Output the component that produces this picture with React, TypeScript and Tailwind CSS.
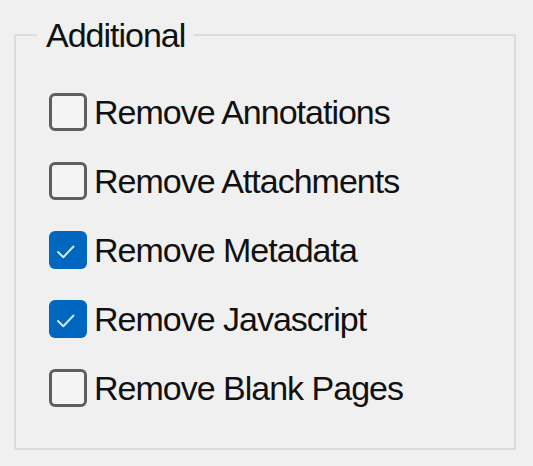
const options = [
  { label: 'Remove Annotations', checked: false },
  { label: 'Remove Attachments', checked: false },
  { label: 'Remove Metadata', checked: true },
  { label: 'Remove Javascript', checked: true },
  { label: 'Remove Blank Pages', checked: false },
]

function CheckBox({ checked }: { checked: boolean }) {
  if (checked) {
    return (
      <span className="flex h-[38px] w-[38px] shrink-0 items-center justify-center rounded-[6px] bg-[#0067c0]">
        <svg width="38" height="38" viewBox="0 0 38 38" fill="none">
          <path
            d="M9 21l5.3 5.2L24.5 15.5"
            stroke="#d6e7f7"
            strokeWidth="2"
            strokeLinecap="round"
            strokeLinejoin="round"
          />
        </svg>
      </span>
    )
  }
  return (
    <span className="block h-[38px] w-[38px] shrink-0 rounded-[6px] border-[3px] border-[#5f5f5f] bg-[#f4f4f4]" />
  )
}

export default function App() {
  return (
    <div
      className="h-[466px] w-[533px] overflow-hidden bg-[#f0f0f0] pt-[17px] text-[34px] tracking-[-1px] text-[#111]"
      style={{ fontFamily: '"Liberation Sans", Arial, sans-serif' }}
    >
      <fieldset className="ml-[14px] w-[502px] rounded-[1px] border-2 border-[#dcdcdc] pb-[26px] pl-[21px] pt-[25px]">
        <legend className="px-[9px] pt-[1px] leading-[34px]">Additional</legend>
        <div className="ml-[12px] flex flex-col">
          {options.map((o) => (
            <label key={o.label} className="flex h-[69px] items-center gap-[7px]">
              <CheckBox checked={o.checked} />
              <span className="leading-[34px]">{o.label}</span>
            </label>
          ))}
        </div>
      </fieldset>
    </div>
  )
}
